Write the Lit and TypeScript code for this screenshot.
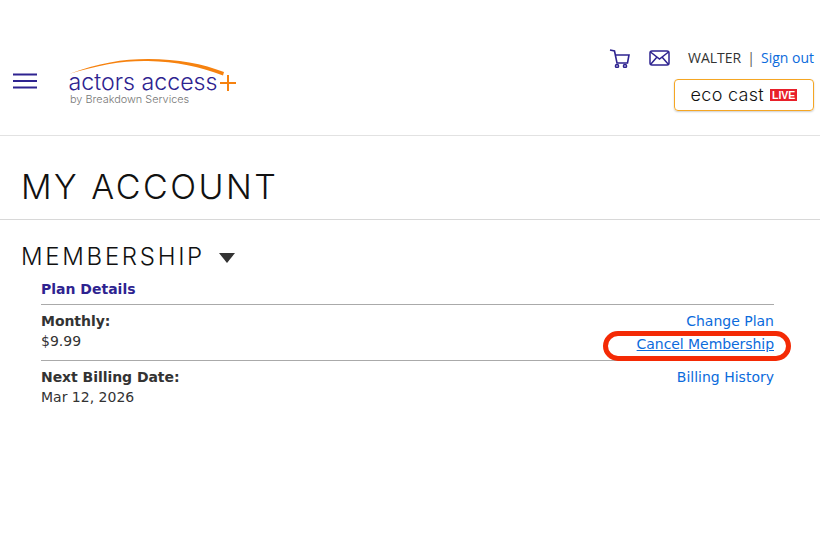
import { LitElement, html, css } from 'lit'
import { customElement } from 'lit/decorators.js'

@customElement('app-root')
export class AppRoot extends LitElement {
  static styles = css`
    :host {
      display: block;
      height: 555px;
      background: white;
      font-family: 'DejaVu Sans', Verdana, sans-serif;
      color: #333;
      overflow: hidden;
    }

    a {
      color: #0b6bdc;
      text-decoration: none;
    }

    header {
      height: 136px;
      box-sizing: border-box;
      border-bottom: 1px solid #e2e2e2;
      display: flex;
      justify-content: space-between;
      padding: 47px 6px 0 13px;
    }

    .left {
      display: flex;
      align-items: flex-start;
    }

    .burger {
      display: block;
      margin-top: 26px;
    }

    .logo {
      position: relative;
      width: 170px;
      height: 62px;
      margin-left: 31px;
    }

    .swoosh {
      position: absolute;
      left: 0;
      top: 0;
    }

    .logo-name {
      position: absolute;
      left: 0.5px;
      top: 25px;
      font: 300 23.2px/20px Inter, sans-serif;
      color: #2e2390;
      white-space: nowrap;
    }

    .logo-sub {
      position: absolute;
      left: 2px;
      top: 46px;
      font: 300 10.9px/12px Inter, sans-serif;
      color: #777;
      white-space: nowrap;
    }

    .right {
      display: flex;
      flex-direction: column;
      align-items: flex-end;
    }

    .top-links {
      display: flex;
      align-items: center;
      height: 22px;
      font: 14px/22px 'Open Sans', sans-serif;
    }

    .top-links svg {
      display: block;
    }

    .mail {
      margin-left: 19px;
    }

    .user {
      margin-left: 18px;
    }

    .sep {
      margin: 0 6px;
      color: #555;
    }

    .eco {
      margin-top: 10px;
      width: 140px;
      height: 32px;
      box-sizing: border-box;
      border: 1px solid #f5a623;
      border-radius: 4px;
      box-shadow: 0 1px 2px rgba(0, 0, 0, 0.2);
      display: flex;
      align-items: center;
      justify-content: center;
      gap: 6px;
      font: 300 18px/1 Inter, sans-serif;
      letter-spacing: 0.3px;
      color: #111;
    }

    .live {
      background: #e8202a;
      color: white;
      font: 700 10.5px/12px 'Liberation Sans', sans-serif;
      letter-spacing: 0;
      padding: 0 2px;
    }

    h1 {
      margin: 0;
      height: 84px;
      box-sizing: border-box;
      padding: 31px 0 0 21px;
      border-bottom: 1px solid #d8d8d8;
      font: 300 34px/40px Inter, sans-serif;
      letter-spacing: 2.5px;
      color: #111;
    }

    h2 {
      margin: 23px 0 0;
      padding-left: 21px;
      display: flex;
      align-items: center;
      gap: 14px;
      font: 300 24px/28px Inter, sans-serif;
      letter-spacing: 2.7px;
      color: #111;
    }

    .caret {
      width: 0;
      height: 0;
      border-left: 8px solid transparent;
      border-right: 8px solid transparent;
      border-top: 10px solid #333;
      margin-top: 2px;
    }

    .details {
      margin: 8px 46px 0 41px;
      font-size: 14px;
      line-height: 20px;
    }

    .plan {
      color: #2e2390;
      font-weight: 700;
      height: 25px;
      border-bottom: 1px solid #aaa;
    }

    .row {
      display: flex;
      justify-content: space-between;
      padding-top: 6px;
    }

    .first {
      height: 49px;
      border-bottom: 1px solid #aaa;
    }

    .label {
      font-weight: 700;
      letter-spacing: -0.05px;
    }

    .links {
      display: flex;
      flex-direction: column;
      align-items: flex-end;
      gap: 3px;
    }

    .cancel {
      position: relative;
      text-decoration: underline;
      letter-spacing: -0.06px;
    }

    .oval {
      position: absolute;
      left: -34px;
      right: -17px;
      top: -3px;
      bottom: -7px;
      border: 5px solid #f42a05;
      border-radius: 15px;
      pointer-events: none;
    }
  `

  render() {
    return html`
      <header>
        <div class="left">
          <svg class="burger" width="24" height="16" viewBox="0 0 24 16">
            <path d="M0 1.5h24M0 8h24M0 14.5h24" stroke="#2e2390" stroke-width="2" fill="none" />
          </svg>
          <div class="logo">
            <svg class="swoosh" width="170" height="50" viewBox="0 0 170 50">
              <path d="M1 27C30 16 55 12 80 12c30 0 55 5 76 13l-1 3.500C133 20 108 14.500 80 14 55 13.500 30 18 1 27z" fill="#f6820f" />
              <path d="M152 36h16M160 28v16" stroke="#f6820f" stroke-width="2" fill="none" />
            </svg>
            <span class="logo-name">actors access</span>
            <span class="logo-sub">by Breakdown Services</span>
          </div>
        </div>
        <div class="right">
          <div class="top-links">
            <svg width="21" height="20" viewBox="0 0 21 20" fill="none" stroke="#2e2390" stroke-width="1.6">
              <path d="M1 2l4.500 1 2.500 12h10.500l1.500-8H6.500" />
              <circle cx="8" cy="18" r="1.5" />
              <circle cx="16" cy="18" r="1.5" />
            </svg>
            <svg class="mail" width="21" height="16" viewBox="0 0 21 16" fill="none" stroke="#2e2390" stroke-width="1.5">
              <rect x="1" y="1" width="19" height="14" rx="2" />
              <path d="M1.500 2l9 7 9-7M1.500 14.500l6.500-7.500M19.500 14.500l-6.500-7.500" />
            </svg>
            <span class="user">WALTER</span>
            <span class="sep">|</span>
            <a href="#">Sign out</a>
          </div>
          <div class="eco">eco cast <span class="live">LIVE</span></div>
        </div>
      </header>
      <h1>MY ACCOUNT</h1>
      <h2>MEMBERSHIP <span class="caret"></span></h2>
      <div class="details">
        <div class="plan">Plan Details</div>
        <div class="row first">
          <div>
            <div class="label">Monthly:</div>
            <div>$9.99</div>
          </div>
          <div class="links">
            <a href="#">Change Plan</a>
            <a class="cancel" href="#">Cancel Membership<span class="oval"></span></a>
          </div>
        </div>
        <div class="row">
          <div>
            <div class="label">Next Billing Date:</div>
            <div>Mar 12, 2026</div>
          </div>
          <div class="links">
            <a href="#">Billing History</a>
          </div>
        </div>
      </div>
    `
  }
}

declare global {
  interface HTMLElementTagNameMap {
    'app-root': AppRoot
  }
}
